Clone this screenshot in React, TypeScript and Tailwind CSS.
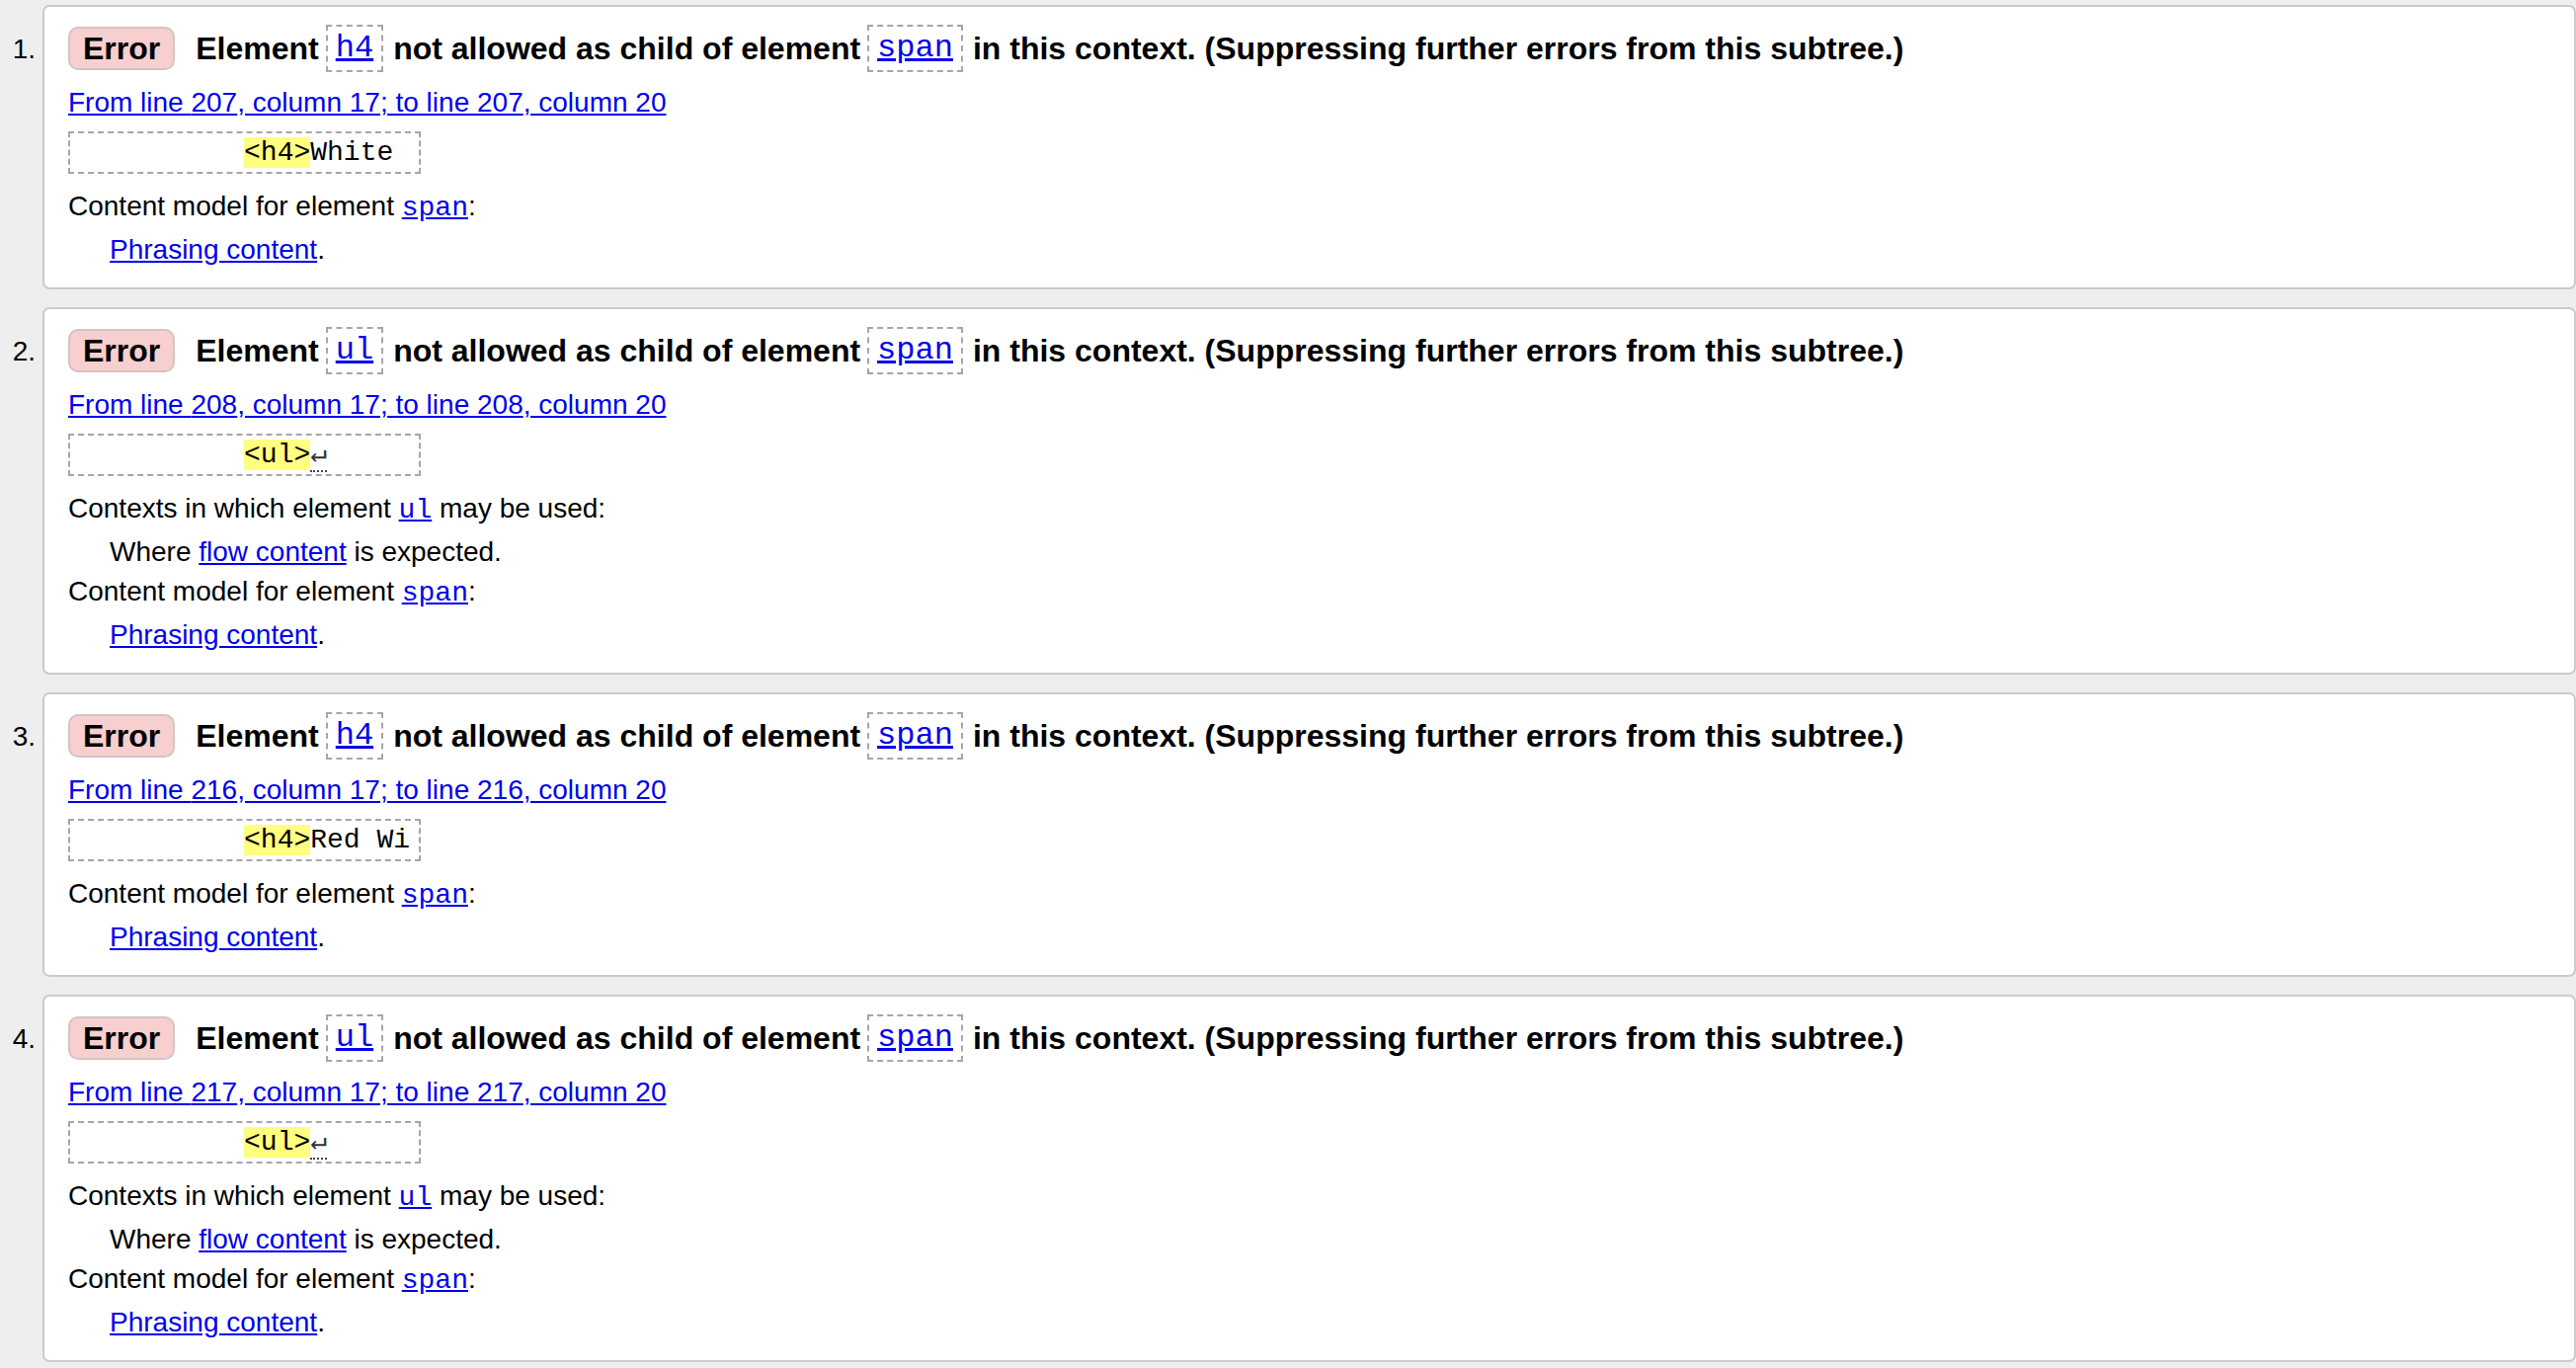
import React from 'react';

type Line = { kind: 'dt' | 'dd'; parts: React.ReactNode };

interface ValidatorError {
  num: number;
  element: string;
  parent: string;
  line: number;
  extract: React.ReactNode;
  details: Line[];
}

const SANS = 'font-["Liberation_Sans",Arial,sans-serif]';

const CodeLink = ({ children }: { children: React.ReactNode }) => (
  <a href="#" className='font-["Liberation_Mono","Courier_New",monospace] font-normal leading-none text-[#0000ee] underline'>
    {children}
  </a>
);

const BoxedCode = ({ children }: { children: React.ReactNode }) => (
  <span className="ml-[7px] mr-[10px] flex h-[48px] items-center border-2 border-dashed border-[#a6a6a6] px-[8px]">
    <CodeLink>{children}</CodeLink>
  </span>
);

const Mark = ({ children }: { children: React.ReactNode }) => (
  <span className="bg-[#ffff80]">{children}</span>
);

const LineBreak = () => (
  <b className="border-b-2 border-dotted border-[#444] font-normal text-[#333]">↵</b>
);

const phrasing = (
  <>
    <a href="#" className="text-[#0000ee] underline">Phrasing content</a>.
  </>
);

const errors: ValidatorError[] = [
  {
    num: 1,
    element: 'h4',
    parent: 'span',
    line: 207,
    extract: (
      <>
        {'          '}
        <Mark>&lt;h4&gt;</Mark>White
      </>
    ),
    details: [
      { kind: 'dt', parts: <>Content model for element <CodeLink>span</CodeLink>:</> },
      { kind: 'dd', parts: phrasing },
    ],
  },
  {
    num: 2,
    element: 'ul',
    parent: 'span',
    line: 208,
    extract: (
      <>
        {'          '}
        <Mark>&lt;ul&gt;</Mark>
        <LineBreak />
      </>
    ),
    details: [
      { kind: 'dt', parts: <>Contexts in which element <CodeLink>ul</CodeLink> may be used:</> },
      { kind: 'dd', parts: <>Where <a href="#" className="text-[#0000ee] underline">flow content</a> is expected.</> },
      { kind: 'dt', parts: <>Content model for element <CodeLink>span</CodeLink>:</> },
      { kind: 'dd', parts: phrasing },
    ],
  },
  {
    num: 3,
    element: 'h4',
    parent: 'span',
    line: 216,
    extract: (
      <>
        {'          '}
        <Mark>&lt;h4&gt;</Mark>Red Wi
      </>
    ),
    details: [
      { kind: 'dt', parts: <>Content model for element <CodeLink>span</CodeLink>:</> },
      { kind: 'dd', parts: phrasing },
    ],
  },
  {
    num: 4,
    element: 'ul',
    parent: 'span',
    line: 217,
    extract: (
      <>
        {'          '}
        <Mark>&lt;ul&gt;</Mark>
        <LineBreak />
      </>
    ),
    details: [
      { kind: 'dt', parts: <>Contexts in which element <CodeLink>ul</CodeLink> may be used:</> },
      { kind: 'dd', parts: <>Where <a href="#" className="text-[#0000ee] underline">flow content</a> is expected.</> },
      { kind: 'dt', parts: <>Content model for element <CodeLink>span</CodeLink>:</> },
      { kind: 'dd', parts: phrasing },
    ],
  },
];

const ErrorItem = ({ err }: { err: ValidatorError }) => (
  <li className="flex items-start">
    {/* list marker */}
    <div className="mt-[29px] w-[43px] shrink-0 pr-[7px] text-right text-[28px] leading-[32px]">{err.num}.</div>

    <div className="min-w-0 flex-1 rounded-[7px] border-2 border-[#cbcbcb] bg-white pb-[22px] pl-[24px] pt-[18px]">
      {/* message */}
      <p className="flex h-[48px] items-center whitespace-nowrap text-[32px] font-bold leading-[36px]">
        <strong className="flex h-[44px] items-center rounded-[10px] border-2 border-[#d2c4c4] bg-[#f7cfcf] px-[13px]">
          Error
        </strong>
        <span className="ml-[21px]">Element</span>
        <BoxedCode>{err.element}</BoxedCode>
        <span>not allowed as child of element</span>
        <BoxedCode>{err.parent}</BoxedCode>
        <span>in this context. (Suppressing further errors from this subtree.)</span>
      </p>

      {/* location */}
      <p className="mt-[15px] h-[32px] text-[28px] leading-[32px]">
        <a href="#" className="text-[#0000ee] underline">
          From line {err.line}, column 17; to line {err.line}, column 20
        </a>
      </p>

      {/* extract */}
      <div className='mt-[13px] flex h-[43px] w-[357px] items-center border-2 border-dashed border-[#a6a6a6] px-[8px] font-["Liberation_Mono","Courier_New",monospace] text-[28px] leading-[32px]'>
        <span className="whitespace-pre">{err.extract}</span>
      </div>

      {/* details */}
      <dl className="mt-[17px] text-[28px] leading-[32px]">
        {err.details.map((d, i) =>
          d.kind === 'dt' ? (
            <dt key={i} className={i === 0 ? 'h-[32px]' : 'mt-[8px] h-[32px]'}>
              {d.parts}
            </dt>
          ) : (
            <dd key={i} className="mt-[12px] h-[32px] pl-[42px]">
              {d.parts}
            </dd>
          )
        )}
      </dl>
    </div>
  </li>
);

export default function App() {
  return (
    <div className={`min-h-[1385px] w-full overflow-hidden bg-[#eeeeee] pt-[5px] text-black ${SANS}`}>
      <ol className="flex flex-col gap-[18px]">
        {errors.map((err) => (
          <ErrorItem key={err.num} err={err} />
        ))}
      </ol>
    </div>
  );
}
